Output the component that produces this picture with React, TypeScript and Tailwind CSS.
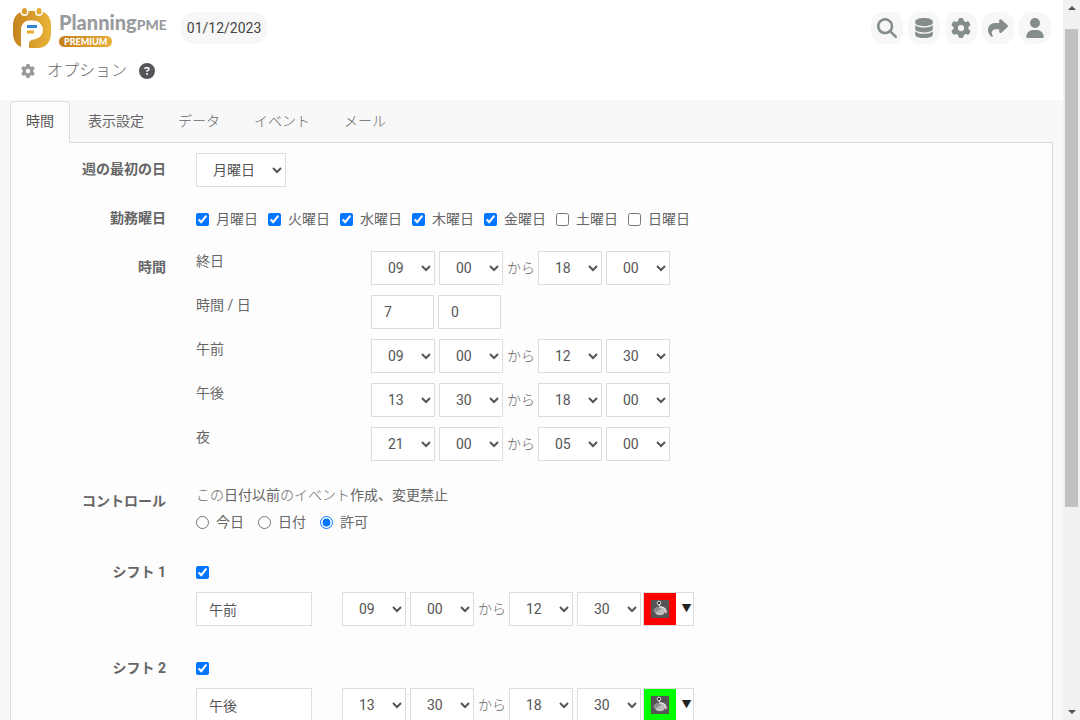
import { useState } from "react";
import {
  FaCircleQuestion,
  FaDatabase,
  FaGear,
  FaMagnifyingGlass,
  FaShare,
  FaUser,
} from "react-icons/fa6";

const tabs = [
  { label: "時間" },
  { label: "表示設定" },
  { label: "データ", kana: true },
  { label: "イベント", kana: true },
  { label: "メール", kana: true },
];

const weekDays = ["月曜日", "火曜日", "水曜日", "木曜日", "金曜日", "土曜日", "日曜日"];

const periods = [
  { name: "午前", range: ["09", "00", "12", "30"] },
  { name: "午後", range: ["13", "30", "18", "00"] },
  { name: "夜", range: ["21", "00", "05", "00"] },
];

const shifts = [
  { title: "シフト 1", name: "午前", range: ["09", "00", "12", "30"], color: "#ff0000" },
  { title: "シフト 2", name: "午後", range: ["13", "30", "18", "30"], color: "#00ff00" },
];

const hours = Array.from({ length: 24 }, (_, i) => String(i).padStart(2, "0"));
const minutes = ["00", "15", "30", "45"];

const Logo = () => (
  <a href="#" aria-label="PlanningPME Premium" className="flex items-start gap-2">
    <svg viewBox="0 0 38 41" className="h-[41px] w-[38px]" aria-hidden="true">
      <defs>
        <linearGradient id="gold" x1="0" x2="1">
          <stop offset="0" stopColor="#c5831f" />
          <stop offset="1" stopColor="#e9b438" />
        </linearGradient>
      </defs>
      <path d="M14 3h10C33 3 38 9 38 17v8c0 9-5 15-14 15H14C5 40 0 34 0 25v-8C0 9 5 3 14 3z" fill="url(#gold)" />
      <rect x="7.500" y="-3" width="8" height="11" rx="4" fill="#fff" />
      <rect x="22" y="-3" width="8" height="11" rx="4" fill="#fff" />
      <rect x="9" y="0" width="5" height="6.500" rx="2.500" fill="#dba030" />
      <rect x="23.500" y="0" width="5" height="6.500" rx="2.500" fill="#e6b037" />
      <path d="M8 41V21a8.500 8.500 0 0 1 8.500-8.500H20a9.500 9.500 0 0 1 1 19c-3 .2-5 1.500-5 4.500v5z" fill="#fff" />
      <path d="M14 18.500h10" stroke="#2f86d6" strokeWidth="3" />
      <path d="M14 24h7" stroke="#e6ab2f" strokeWidth="3" />
    </svg>
    <span className="flex flex-col items-start pt-1 font-['Lato']">
      <span className="text-xl leading-5 font-black text-[#999b9e]">
        Planning<span className="text-sm leading-5">PME</span>
      </span>
      <span className="mt-px rounded-full bg-linear-to-r from-[#c77f1e] to-[#e6b03a] px-[5px] text-[9px] leading-[11px] font-black text-white">
        PREMIUM
      </span>
    </span>
  </a>
);

const NumberSelect = ({ value, label, options }: { value: string; label: string; options: string[] }) => (
  <select
    aria-label={label}
    defaultValue={value}
    className="h-[34px] w-16 border border-[#ddd] bg-white px-3 text-[#555]"
  >
    {options.map((option) => (
      <option key={option}>{option}</option>
    ))}
  </select>
);

const TimeRange = ({ name, range }: { name: string; range: string[] }) => (
  <div className="flex items-center gap-1">
    <NumberSelect label={`${name} 開始 時`} value={range[0]} options={hours} />
    <NumberSelect label={`${name} 開始 分`} value={range[1]} options={minutes} />
    <span className="w-[27px] font-light whitespace-nowrap">から</span>
    <NumberSelect label={`${name} 終了 時`} value={range[2]} options={hours} />
    <NumberSelect label={`${name} 終了 分`} value={range[3]} options={minutes} />
  </div>
);

const FormRow = ({ label, children }: { label: string; children: React.ReactNode }) => (
  <div className="flex gap-[30px]">
    <div className="w-[155px] shrink-0 pt-1.5 text-right font-bold">{label}</div>
    <div className="min-w-0 flex-1">{children}</div>
  </div>
);

const ColorPicker = ({ color }: { color: string }) => (
  <button type="button" aria-label="色" className="flex h-[34px] border border-[#ddd] bg-white">
    <span className="flex h-8 w-8 items-center justify-center" style={{ backgroundColor: color }}>
      <svg viewBox="0 0 18 18" className="size-[18px]" aria-hidden="true">
        <rect width="18" height="18" fill="#555" />
        <path d="M2.500 10.500 9.500 6.500l5 4-1.500 3.500c-2 1.500-5 1.500-7.500.5z" fill="#bdbdbd" />
        <path d="M2.500 10.500c0-2 5-5 7-4l1 1.500c-1 2-4 4-6 4.500z" fill="#8e8e8e" />
        <circle cx="8" cy="3" r="1.800" fill="#333" stroke="#ddd" strokeWidth="1" />
        <path d="M8 4.500 9.500 8" stroke="#ddd" strokeWidth="1.200" />
        <path d="M10 7c3.500.5 5 2.500 5 5.500" fill="none" stroke="#e6e6e6" strokeWidth="1.500" />
        <circle cx="15" cy="12.500" r="1" fill="#e9a0a0" />
      </svg>
    </span>
    <span className="w-[17px] pl-1 text-center text-[10px] leading-8 text-[#222]">▼</span>
  </button>
);

const HeaderButton = ({ label, children }: { label: string; children: React.ReactNode }) => (
  <button
    type="button"
    aria-label={label}
    className="flex size-8 items-center justify-center rounded-xl bg-[#f7f7f7] text-xl text-[#848c8c]"
  >
    {children}
  </button>
);

const ScrollBar = () => (
  <div aria-hidden="true" className="flex w-[17px] shrink-0 flex-col items-center bg-[#f1f1f1] py-1.5">
    <svg viewBox="0 0 8 4" className="h-1 w-2">
      <path d="M0 4 4 0l4 4z" fill="#505050" />
    </svg>
    <div className="mt-[19px] mb-2 flex w-[13px] flex-1 flex-col">
      <div className="h-[71%] bg-[#c1c1c1]" />
    </div>
    <svg viewBox="0 0 8 4" className="h-1 w-2">
      <path d="M0 0h8L4 4z" fill="#505050" />
    </svg>
  </div>
);

export default function App() {
  const [activeTab, setActiveTab] = useState(0);

  return (
    <div className="flex h-screen overflow-hidden bg-[#f8f8f8] font-['Roboto','Noto_Sans_CJK_JP',sans-serif] text-sm leading-5 text-[#666]">
      <div className="min-w-0 flex-1 overflow-hidden">
        <header className="h-[100px] bg-white">
          <div className="flex items-start justify-between pt-2 pr-3 pl-[13px]">
            <div className="flex items-start gap-3.5">
              <Logo />
              <button type="button" className="mt-1 h-8 rounded-xl bg-[#f7f7f7] px-1.5 text-[#444]">
                01/12/2023
              </button>
            </div>
            <div className="mt-1 flex gap-[5px]">
              <HeaderButton label="検索"><FaMagnifyingGlass /></HeaderButton>
              <HeaderButton label="リソース"><FaDatabase /></HeaderButton>
              <HeaderButton label="設定"><FaGear /></HeaderButton>
              <HeaderButton label="共有"><FaShare /></HeaderButton>
              <HeaderButton label="アカウント"><FaUser /></HeaderButton>
            </div>
          </div>
          <div className="mt-2.5 flex items-center pl-[21px] text-base">
            <FaGear className="size-3.5 text-[#999]" />
            <h1 className="ml-3 font-light">オプション</h1>
            <button type="button" aria-label="ヘルプ" className="ml-3 text-[#555559]">
              <FaCircleQuestion />
            </button>
          </div>
        </header>

        <main className="px-2.5 pt-px">
          <div role="tablist" className="flex gap-0.5">
            {tabs.map((tab, i) => (
              <button
                key={tab.label}
                type="button"
                role="tab"
                aria-selected={i === activeTab}
                onClick={() => setActiveTab(i)}
                className={`relative h-[42px] rounded-t border px-[15px] pb-0.5 ${
                  i === activeTab
                    ? "z-10 border-[#ddd] border-b-[#fdfdfd] bg-[#fdfdfd] text-[#555]"
                    : "border-transparent"
                } ${tab.kana ? "font-light" : ""}`}
              >
                {tab.label}
              </button>
            ))}
          </div>

          <form className="-mt-px border border-[#ddd] bg-[#fdfdfd] pt-2.5 pb-6">
            <div className="flex flex-col gap-[15px]">
              <FormRow label="週の最初の日">
                <select
                  aria-label="週の最初の日"
                  defaultValue="月曜日"
                  className="h-[34px] w-[90px] border border-[#ddd] bg-white px-3 text-[#555]"
                >
                  {weekDays.map((day) => (
                    <option key={day}>{day}</option>
                  ))}
                </select>
              </FormRow>

              <FormRow label="勤務曜日">
                <div className="flex h-8.5 items-center gap-2.5">
                  {weekDays.map((day, i) => (
                    <label key={day} className="flex items-center gap-[7px]">
                      <input type="checkbox" defaultChecked={i < 5} className="size-[13px]" />
                      {day}
                    </label>
                  ))}
                </div>
              </FormRow>

              <FormRow label="時間">
                <div className="flex flex-col gap-2.5">
                  <div className="flex">
                    <div className="w-[175px]">終日</div>
                    <TimeRange name="終日" range={["09", "00", "18", "00"]} />
                  </div>
                  <div className="flex">
                    <div className="w-[175px]">時間 / 日</div>
                    <div className="flex gap-1">
                      <input aria-label="時間" defaultValue="7" className="h-[34px] w-[63px] border border-[#ddd] bg-white px-3 text-[#555]" />
                      <input aria-label="分" defaultValue="0" className="h-[34px] w-[63px] border border-[#ddd] bg-white px-3 text-[#555]" />
                    </div>
                  </div>
                  {periods.map((period) => (
                    <div key={period.name} className="flex">
                      <div className="w-[175px]">{period.name}</div>
                      <TimeRange name={period.name} range={period.range} />
                    </div>
                  ))}
                </div>
              </FormRow>
            </div>

            <div className="mt-6">
              <FormRow label="コントロール">
                <p>
                  <span className="font-light">この</span>日付以前
                  <span className="font-light">のイベント</span>作成、変更禁止
                </p>
                <div className="mt-[7px] flex gap-3.5">
                  {["今日", "日付", "許可"].map((choice) => (
                    <label key={choice} className="flex items-center gap-[7px]">
                      <input type="radio" name="control" defaultChecked={choice === "許可"} className="size-[13px]" />
                      {choice}
                    </label>
                  ))}
                </div>
              </FormRow>
            </div>

            <div className="mt-6 flex flex-col gap-[26px]">
              {shifts.map((shift) => (
                <FormRow key={shift.title} label={shift.title}>
                  <div className="flex h-9 items-center pb-1">
                    <input type="checkbox" aria-label={shift.title} defaultChecked className="size-[13px]" />
                  </div>
                  <div className="flex">
                    <input
                      aria-label={`${shift.title} 名前`}
                      defaultValue={shift.name}
                      className="mr-[30px] h-[34px] w-[116px] border border-[#ddd] bg-white px-3 text-[#555]"
                    />
                    <TimeRange name={shift.title} range={shift.range} />
                    <div className="ml-0.5">
                      <ColorPicker color={shift.color} />
                    </div>
                  </div>
                </FormRow>
              ))}
            </div>
          </form>
        </main>
      </div>
      <ScrollBar />
    </div>
  );
}
